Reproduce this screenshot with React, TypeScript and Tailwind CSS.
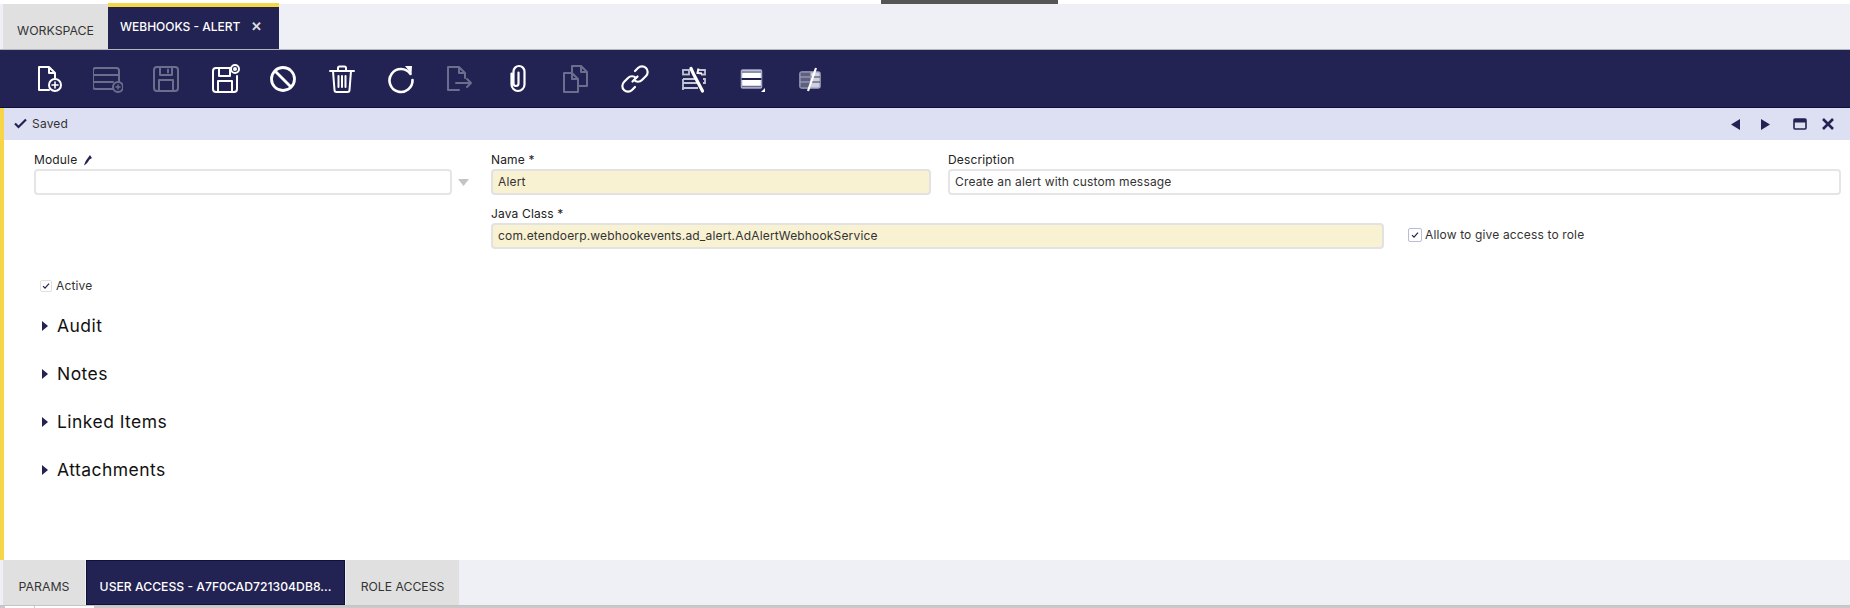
import React from "react";

const S = ({ children, off, w = 30, vb = "0 0 30 30" }: { children: React.ReactNode; off?: boolean; w?: number; vb?: string }) => (
  <svg width={w} height={w} viewBox={vb} fill="none" stroke={off ? "#6d6e8e" : "#ffffff"} strokeWidth="2" strokeLinejoin="round" strokeLinecap="round">
    {children}
  </svg>
);

const icons: React.ReactNode[] = [
  <S key="a"><path d="M5 3h10l6 6v5M5 3v23h10M15 3v6h6" /><circle cx="21" cy="21" r="6" /><path d="M18 21h6M21 18v6" strokeWidth="1.6" /></S>,
  <S key="b" off><rect x="0" y="4" width="26" height="21" rx="2.500" /><path d="M0 11h26M0 18h20" /><circle cx="25" cy="23" r="5" fill="#222352" /><path d="M23 23h4M25 21v4" strokeWidth="1.500" /></S>,
  <S key="c" off><rect x="3" y="3" width="24" height="24" rx="3" /><path d="M9 3v8h12V3M8 27V16h14v11" /><path d="M17 5.500v3" /></S>,
  <S key="d"><path d="M20 4H6a3 3 0 0 0-3 3v18a3 3 0 0 0 3 3h18a3 3 0 0 0 3-3V12" /><path d="M9 4v8h11V4M8 28V17h14v11" /><circle cx="25" cy="5" r="4" fill="#222352" /><circle cx="25" cy="5" r="1" fill="#fff" /></S>,
  <S key="e"><circle cx="15" cy="15" r="11.500" strokeWidth="2.800" /><path d="M7 7l16 16" strokeWidth="2.800" /></S>,
  <S key="f"><path d="M3 7h24M11 7V4a1.500 1.500 0 0 1 1.500-1.500h5A1.500 1.500 0 0 1 19 4v3M6 7l1.500 19a2 2 0 0 0 2 2h11a2 2 0 0 0 2-2L24 7M11.500 12v11M15 12v11M18.500 12v11" /></S>,
  <S key="g"><path d="M24.500 10A11.500 11.500 0 1 0 26.500 16" strokeWidth="2.600" /><path d="M19 2l7 0-.5 8z" fill="#fff" stroke="none" /></S>,
  <S key="h" off><path d="M15 26H4V3h11l6 6v5M15 3v6h6" /><path d="M12 19h15M23 15l4 4-4 4" /></S>,
  <S key="i"><path d="M9 10v11a6.500 6.500 0 0 0 13 0V8a5.500 5.500 0 0 0-11 0v12a2.500 2.500 0 0 0 5 0V9" transform="translate(-.5 -.5)" strokeWidth="2.200" /></S>,
  <S key="j" off><path d="M11 8V2h9l6 6v14H17M20 2v6h6" /><path d="M3 9h8l6 6v13H3zM11 9v6h6" /></S>,
  <S key="k"><path d="M12.500 17.500l5-5" strokeWidth="2.200" /><path d="M15 7l3-3a5.500 5.500 0 0 1 8 8l-4 4a5.500 5.500 0 0 1-8 0M15 23l-3 3a5.500 5.500 0 0 1-8-8l4-4a5.500 5.500 0 0 1 8 0" strokeWidth="2.200" /></S>,
  <svg key="l" width="30" height="30" viewBox="0 0 30 30" fill="none">
    <g stroke="#c4c5d6" strokeWidth="1.800">
      <rect x="4" y="6" width="6" height="4.500" />
      <path d="M20 6h6v4.500h-4M4 15h12M24 15h2v4h-2M4 15v4h14M4 19v5h15" />
      <path d="M4 24v2" />
    </g>
    <path d="M12 4.500l2.500 5.500 9 17" stroke="#fff" strokeWidth="3.200" strokeLinecap="round" />
    <path d="M19.500 4.500l-1 4.500 4.500 .5" stroke="#fff" strokeWidth="2" />
  </svg>,
  <svg key="m" width="30" height="30" viewBox="0 0 30 30"><rect x="4.500" y="6" width="20" height="18" rx="1" fill="#fff" stroke="#a9aac6" strokeWidth="1.500" /><path d="M4.500 15h20" stroke="#222352" strokeWidth="2" /><path d="M5 8h19M5 22.500h19" stroke="#6b6c90" strokeWidth="1.400" /><path d="M28 28h-4l4-4z" fill="#fff" /></svg>,
  <svg key="n" width="30" height="30" viewBox="0 0 30 30" fill="none"><rect x="4" y="8" width="20" height="16" rx="2" fill="#cfd0dc" stroke="#a9aac2" strokeWidth="1.500" /><path d="M4 13h20M4 18h20" stroke="#3a3b66" strokeWidth="1.200" /><path d="M4.500 8.500h10v15h-10z" fill="#222352" opacity=".65" /><path d="M4 13h11M4 18h11" stroke="#c9cad8" strokeWidth="1.200" /><path d="M20 4L12 27" stroke="#fff" strokeWidth="2.200" /></svg>,
];

const Check = ({ size, frame }: { size: string; frame: string }) => (
  <span className={`flex items-center justify-center rounded-[2px] border bg-white ${size} ${frame}`}>
    <svg width="8" height="8" viewBox="0 0 8 8" fill="none" stroke="#222352" strokeWidth="1.200"><path d="M1 4.200l2 2 4-4.500" /></svg>
  </span>
);

const Field = ({ label, value, tone, width }: { label: React.ReactNode; value?: string; tone?: boolean; width: string }) => (
  <div className={`flex flex-col ${width}`}>
    <label className="flex h-[21px] items-center gap-[6px] pt-[3px] text-[12px] tracking-[0.15px] text-[#222]">{label}</label>
    <div className={`flex h-[26px] items-center rounded-[4px] border-2 px-[5px] text-[12px] tracking-[0.17px] text-[#333] ${tone ? "border-[#e2e2e2] bg-[#f8f1d2]" : "border-[#e5e5e5] bg-white"}`}>{value}</div>
  </div>
);

const Section = ({ title }: { title: string }) => (
  <div className="flex h-[48px] items-center gap-[9px] pl-[38px]">
    <svg width="6" height="10" viewBox="0 0 6 10"><path d="M0 0l6 5-6 5z" fill="#222352" /></svg>
    <span className="text-[17.500px] tracking-[0.45px] text-[#111]">{title}</span>
  </div>
);

export default function App() {
  return (
    <div className="flex h-[608px] w-[1850px] flex-col overflow-hidden bg-white font-['Inter','Open_Sans',sans-serif]">
      <div className="h-[4px] shrink-0">
        <div className="ml-[881px] h-[4px] w-[177px] bg-[#555555]" />
      </div>

      <div className="flex h-[46px] shrink-0 items-end border-b border-[#b5b5bd] bg-[#eff0f5] pl-[3px]">
        <div className="flex h-[45px] w-[105px] items-center justify-center bg-[#e0e0e0] pt-[9px] text-[12.300px] text-[#333]">WORKSPACE</div>
        <div className="flex h-[46px] w-[171px] items-center gap-[11px] border-t-4 border-[#f6d547] bg-[#222352] pl-[12px] pb-[2px] text-[12px] font-medium text-white">
          <span>WEBHOOKS - ALERT</span>
          <span className="text-[13px] font-bold text-[#ddd]">✕</span>
        </div>
      </div>

      <div className="flex h-[58px] shrink-0 items-center border-b border-[#10113a] bg-[#222352] pl-[34px]">
        {icons.map((ic, i) => (
          <div key={i} className="flex w-[58.600px] shrink-0 justify-start">{ic}</div>
        ))}
      </div>

      <div className="flex min-h-0 flex-1 border-l-4 border-[#f6d547]">
        <div className="flex min-w-0 flex-1 flex-col">
          <div className="flex h-[32px] shrink-0 items-center bg-[#dde0f3] pl-[10px] pr-[16px]">
            <svg className="mb-[2px]" width="13" height="11" viewBox="0 0 13 11" fill="none" stroke="#222352" strokeWidth="2.200"><path d="M1 5.500l3.500 3.500L12 1.500" /></svg>
            <span className="ml-[5px] text-[12px] tracking-[0.2px] text-[#333]">Saved</span>
            <div className="ml-auto flex items-center">
              <svg width="10" height="11" viewBox="0 0 10 11"><path d="M9 0v11L0 5.500z" fill="#222352" /></svg>
              <svg className="ml-[19px]" width="10" height="11" viewBox="0 0 10 11"><path d="M1 0v11l9-5.500z" fill="#222352" /></svg>
              <svg className="ml-[23px]" width="14" height="12" viewBox="0 0 14 12"><rect x="1" y="1" width="12" height="10" rx="1" fill="none" stroke="#222352" strokeWidth="1.600" /><rect x="1" y="1" width="12" height="3.500" fill="#222352" /></svg>
              <svg className="ml-[15px]" width="12" height="12" viewBox="0 0 12 12" fill="none" stroke="#222352" strokeWidth="2.600"><path d="M1 1l10 10M11 1L1 11" /></svg>
            </div>
          </div>

          <div className="flex shrink-0 pl-[30px] pt-[8px]">
            <div className="flex w-[457px] shrink-0 items-end gap-[1px] self-start">
              <Field
                width="w-[418px]"
                label={
                  <>
                    Module
                    <svg width="9" height="11" viewBox="0 0 9 11"><path d="M7 0c1 2 2 3 2 3L6.500 4.500C5 7 3.500 9 1 10.500 1.500 8 3 5.500 4.500 3.500z" fill="#222352" /></svg>
                  </>
                }
              />
              <svg className="mb-[9px] ml-[5px]" width="11" height="7" viewBox="0 0 11 7"><path d="M0 0h11L5.500 7z" fill="#c4c4c4" /></svg>
            </div>
            <div className="flex min-w-0 flex-1 flex-col">
              <div className="flex gap-[17px] pr-[9px]">
                <Field width="w-[440px]" label="Name *" value="Alert" tone />
                <Field width="flex-1" label="Description" value="Create an alert with custom message" />
              </div>
              <div className="mt-[7px] flex items-end">
                <Field width="w-[893px]" label="Java Class *" value="com.etendoerp.webhookevents.ad_alert.AdAlertWebhookService" tone />
                <div className="mb-[5px] ml-[24px] flex items-center gap-[3px] text-[12px] tracking-[0.15px] text-[#333]">
                  <Check size="h-[14px] w-[14px]" frame="border-[#b9bbd8]" />
                  Allow to give access to role
                </div>
              </div>
            </div>
          </div>

          <div className="flex items-center gap-[4px] pl-[36px] pt-[28px] text-[12px] tracking-[0.15px] text-[#333]">
            <Check size="h-[12px] w-[12px]" frame="border-[#e0e0e0]" />
            Active
          </div>

          <div className="flex flex-col pt-[7px]">
            <Section title="Audit" />
            <Section title="Notes" />
            <Section title="Linked Items" />
            <Section title="Attachments" />
          </div>
        </div>
      </div>

      <div className="flex h-[45px] shrink-0 bg-[#eff0f5] pl-[3px]">
        <div className="flex w-[82px] items-center justify-center bg-[#e0e0e0] pt-[9px] text-[12.300px] text-[#333]">PARAMS</div>
        <div className="ml-px flex w-[259px] items-center justify-center border border-[#10113a] bg-[#222352] pt-[9px] text-[12.200px] font-medium text-white">USER ACCESS - A7F0CAD721304DB8...</div>
        <div className="ml-px flex w-[113px] items-center justify-center bg-[#e0e0e0] pt-[9px] text-[12.200px] text-[#333]">ROLE ACCESS</div>
      </div>
      <div className="flex h-[3px] shrink-0 border-t border-[#c4c4c4] bg-[#c9c9c9] pl-[5px]">
        <div className="h-[2px] w-[29px] bg-white" />
        <div className="ml-px h-[2px] w-[59px] bg-white" />
      </div>
    </div>
  );
}
